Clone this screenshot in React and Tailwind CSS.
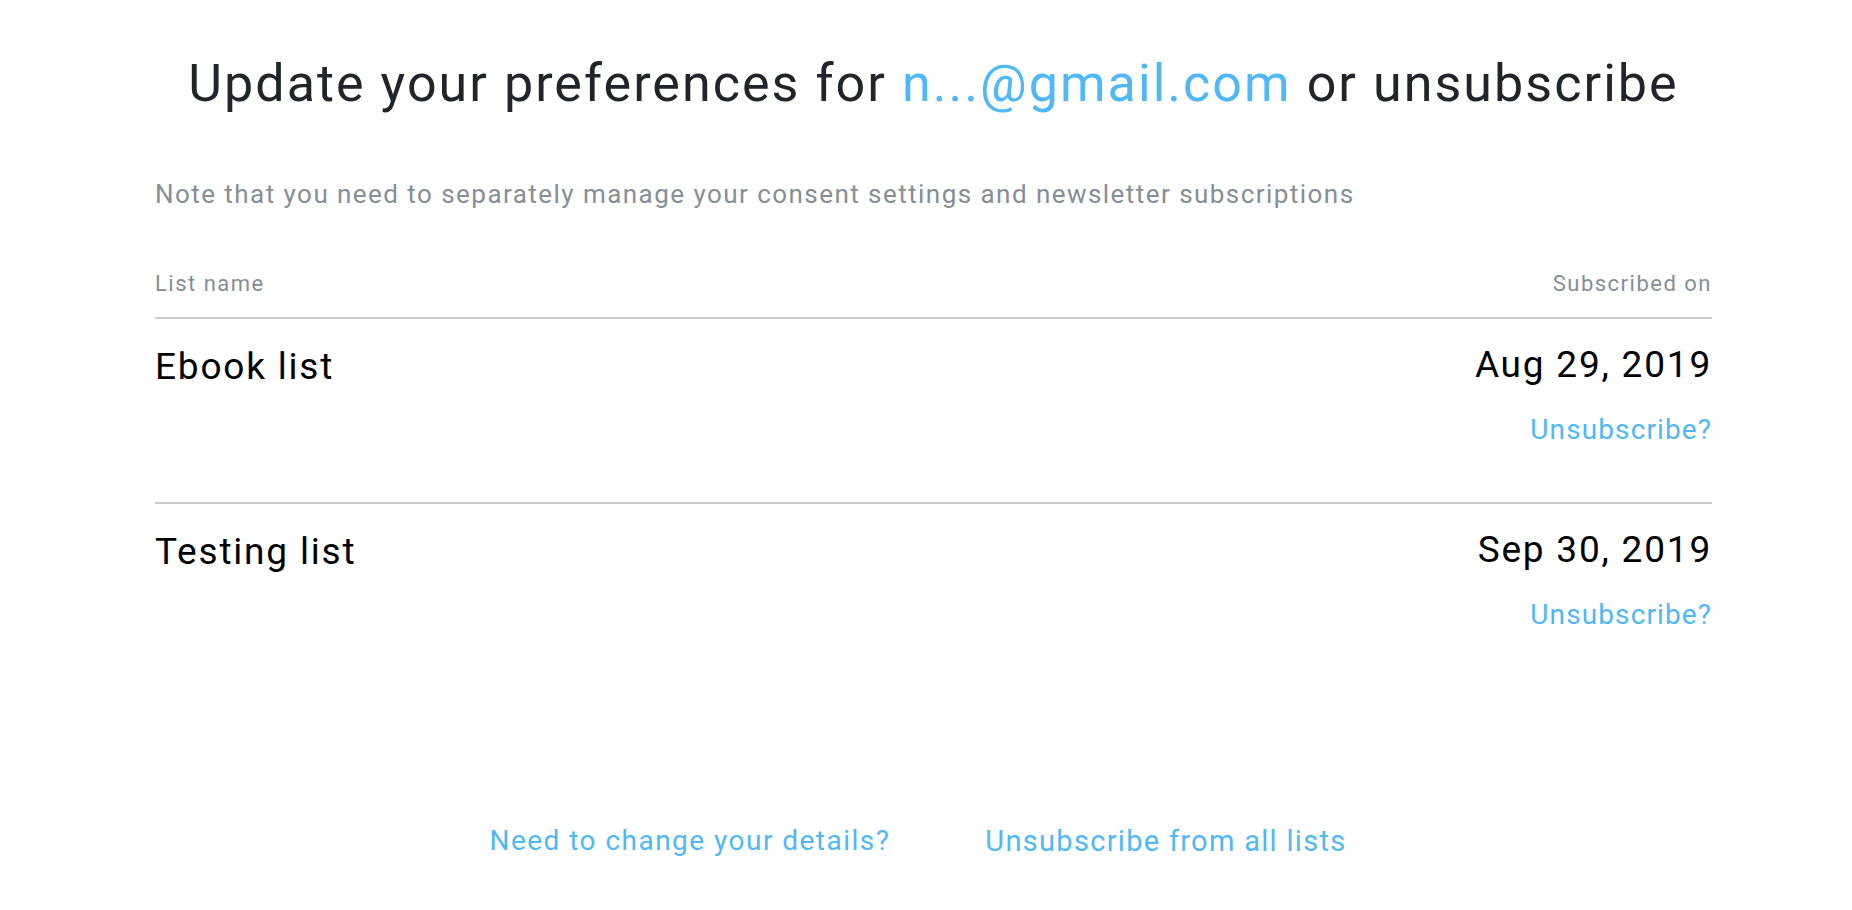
import React from "react";

const lists = [
  { id: 1, name: "Ebook list", date: "Aug 29, 2019" },
  { id: 2, name: "Testing list", date: "Sep 30, 2019" },
];

export default function App() {
  return (
    <div
      className="min-h-screen bg-white pl-[155px] pr-[140px]"
      style={{ fontFamily: "Roboto, 'Noto Sans', sans-serif" }}
    >
      {/* Heading */}
      <h1 className="pt-[58px] text-center text-[52px] leading-none font-normal tracking-[2.05px] whitespace-nowrap text-[#212529]">
        Update your preferences for{" "}
        <span className="text-[#4fb8f5]">n...@gmail.com</span> or unsubscribe
      </h1>

      <p className="mt-[71px] text-[26px] leading-none tracking-[1.45px] text-[#868e96]">
        Note that you need to separately manage your consent settings and
        newsletter subscriptions
      </p>

      {/* Table header */}
      <div className="mt-[66px] flex justify-between border-b-2 border-[#cccccc] pb-[22px] text-[22px] leading-none tracking-[1.5px] text-[#868e96]">
        <span>List name</span>
        <span>Subscribed on</span>
      </div>

      {/* Rows */}
      {lists.map((list, i) => (
        <div
          key={list.id}
          className={
            "flex justify-between pt-[27px] pb-[58px] " +
            (i < lists.length - 1 ? "border-b-2 border-[#cccccc]" : "")
          }
        >
          <div className="mt-[2px] text-[37px] leading-none tracking-[1.8px] text-black">
            {list.name}
          </div>
          <div className="flex flex-col items-end">
            <div className="text-[37px] leading-none tracking-[1.8px] text-black">
              {list.date}
            </div>
            <a
              href="#"
              className="mt-[33px] text-[28px] leading-none tracking-[1.1px] text-[#4fb8f5]"
            >
              Unsubscribe?
            </a>
          </div>
        </div>
      ))}

      {/* Footer links */}
      <div className="mt-[140px] flex justify-center gap-[95px] pr-[31px]">
        <a href="#" className="text-[28px] leading-none tracking-[1.47px] text-[#4fb8f5]">
          Need to change your details?
        </a>
        <a href="#" className="text-[29px] leading-none tracking-[1.3px] text-[#4fb8f5]">
          Unsubscribe from all lists
        </a>
      </div>
    </div>
  );
}
